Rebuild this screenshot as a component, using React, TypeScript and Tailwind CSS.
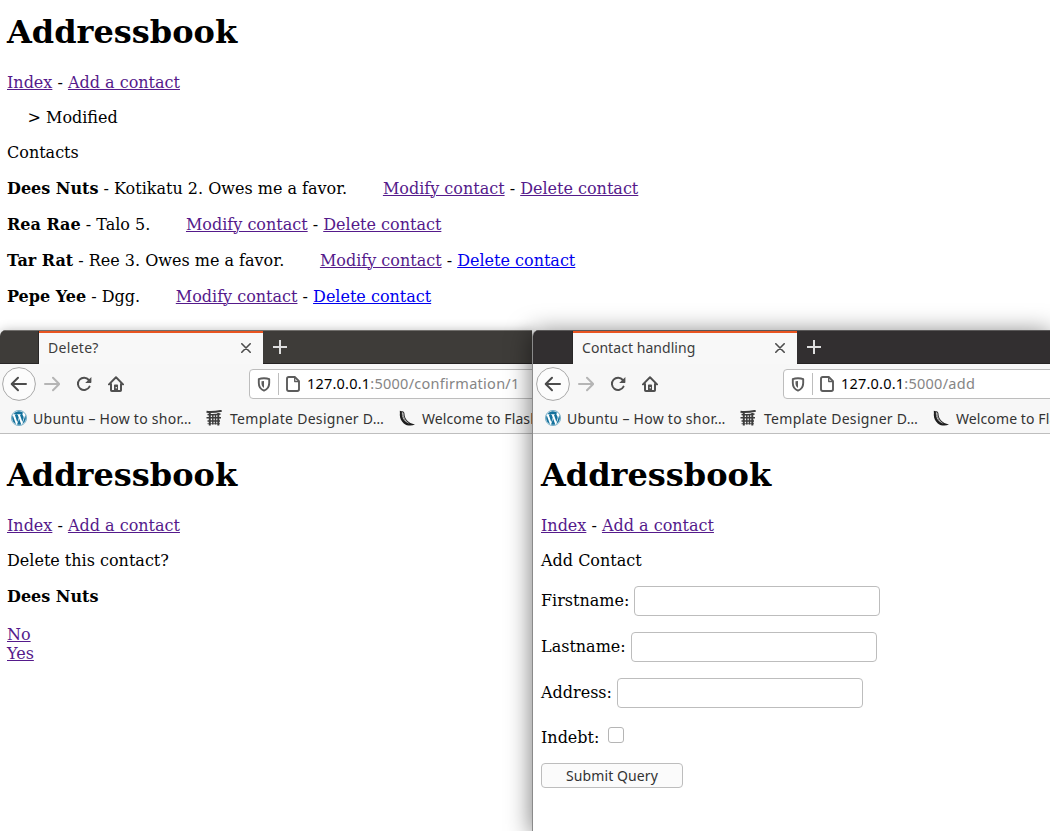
import React from "react";

const VISITED = "text-[#551a8b] underline underline-offset-[1px] decoration-1";
const UNVISITED = "text-[#0000ee] underline underline-offset-[1px] decoration-1";

function Link({ children, fresh = false }: { children: React.ReactNode; fresh?: boolean }) {
  return <a className={fresh ? UNVISITED : VISITED}>{children}</a>;
}

function Header() {
  return (
    <>
      <h1 className="text-[32px] leading-[38px] font-bold">Addressbook</h1>
      <p className="mt-[22px]">
        <Link>Index</Link> - <Link>Add a contact</Link>
      </p>
    </>
  );
}

type Contact = { name: string; info: string; fresh: boolean };

const contacts: Contact[] = [
  { name: "Dees Nuts", info: "Kotikatu 2. Owes me a favor.", fresh: false },
  { name: "Rea Rae", info: "Talo 5.", fresh: false },
  { name: "Tar Rat", info: "Ree 3. Owes me a favor.", fresh: true },
  { name: "Pepe Yee", info: "Dgg.", fresh: true },
];

function BackIcon() {
  return (
    <svg width="34" height="34" viewBox="0 0 34 34" fill="none" className="shrink-0">
      <circle cx="17" cy="17" r="16.4" fill="#fcfcfc" stroke="#a8a8a8" />
      <path d="M24 17H10M16 10.7 9.7 17l6.3 6.3" stroke="#4c4c4c" strokeWidth="2" strokeLinecap="round" strokeLinejoin="round" />
    </svg>
  );
}

function ForwardIcon() {
  return (
    <svg width="16" height="16" viewBox="0 0 16 16" fill="none" stroke="#b5b5b5" strokeWidth="2" strokeLinecap="round" strokeLinejoin="round" className="shrink-0">
      <path d="M1 8h14M9 1.7 15.2 8 9 14.3" />
    </svg>
  );
}

function ReloadIcon() {
  return (
    <svg width="16" height="16" viewBox="0 0 16 16" fill="none" className="shrink-0">
      <path d="M12.8 4A6.1 6.1 0 1 0 13.5 10.6" stroke="#505050" strokeWidth="2" strokeLinecap="round" />
      <path d="M15.4 1v5.3a.7.7 0 0 1-.7.7H9.2z" fill="#505050" />
    </svg>
  );
}

function HomeIcon() {
  return (
    <svg width="16" height="16" viewBox="0 0 16 16" fill="none" className="shrink-0">
      <path d="M1 8.4 8 1.3l7 7.1M3 8v6.2a.8.8 0 0 0 .8.8h8.4a.8.8 0 0 0 .8-.8V8" stroke="#505050" strokeWidth="2" strokeLinecap="round" strokeLinejoin="round" />
      <path d="M6 15V9.6c0-.6.4-1 1-1h2c.6 0 1 .4 1 1V15z" fill="#505050" />
      <circle cx="8.3" cy="11.7" r=".8" fill="#f7f7f7" />
    </svg>
  );
}

function ShieldIcon() {
  return (
    <svg width="14" height="15" viewBox="0 0 14 15" fill="none" className="shrink-0">
      <path d="M7 1.2c2 0 3.8.3 5.2.9V6c0 3.600-1.800 6.300-5.200 7.600C3.600 12.300 1.800 9.600 1.800 6V2.100C3.200 1.500 5 1.200 7 1.200Z" stroke="#5c5c5c" strokeWidth="1.9" strokeLinejoin="round" />
      <path d="M7 4v7C5.200 9.900 4.500 8.300 4.500 6.300V4.300Q5.600 4 7 4Z" fill="#5c5c5c" />
    </svg>
  );
}

function PageIcon() {
  return (
    <svg width="14" height="16" viewBox="0 0 14 16" fill="none" stroke="#5c5c5c" strokeWidth="1.9" strokeLinejoin="round" className="shrink-0">
      <path d="M2.700 1H8.800L13 5.200V13.300Q13 15 11.300 15H2.700Q1 15 1 13.300V2.700Q1 1 2.700 1Z" />
      <path d="M8.700 1.500V5.500H12.700" strokeWidth="1.300" />
    </svg>
  );
}

function WordpressIcon() {
  return (
    <svg width="16" height="16" viewBox="0 0 16 16" className="shrink-0">
      <circle cx="8" cy="8" r="7.600" fill="#fff" stroke="#4590b3" strokeWidth=".7" />
      <path
        fill="#14719c"
        d="M1.150 8c0 2.700 1.600 5.100 3.850 6.150L1.750 5.200A6.900 6.900 0 0 0 1.150 8Zm11.500-.35c0-.85-.3-1.450-.56-1.900-.35-.55-.67-1.030-.67-1.600 0-.62.47-1.200 1.140-1.200h.08A6.850 6.850 0 0 0 2.280 4.250h.44c.7 0 1.820-.1 1.820-.1.370 0 .42.520.05.550 0 0-.37.050-.78.070l2.480 7.370 1.490-4.460-1.060-2.910c-.37-.02-.7-.07-.7-.07-.38-.02-.34-.57.020-.55 0 0 1.120.1 1.790.1.710 0 1.820-.1 1.820-.1.370 0 .42.520.050.550 0 0-.37.050-.78.070l2.460 7.310.68-2.260c.35-.9.590-1.610.590-2.170ZM8.120 8.600l-2.050 5.970a6.850 6.850 0 0 0 4.200-.11ZM14 4.700c.1 1.100-.1 2.100-.6 3.300l-2.070 5.960A6.850 6.850 0 0 0 14 4.700Z"
      />
    </svg>
  );
}

function TempleIcon() {
  return (
    <svg width="17" height="16" viewBox="0 0 17 16" fill="none" stroke="#3d3d3d" className="shrink-0">
      <path d="M.5 1.800Q7 2.700 15.700.7" strokeWidth="2" />
      <path d="M1.500 4.500Q8 5.200 14.500 4" strokeWidth="1.500" />
      <path d="M.5 7.700h14.500M1.500 11h12.500" strokeWidth="1.400" />
      <path d="M3.800 3v12.500M12.300 3v12.500" strokeWidth="2" />
      <path d="M6.800 5v9.500M9.500 5v9.500" strokeWidth="1.500" />
      <path d="M1.500 13.700h12.500" strokeWidth=".8" />
    </svg>
  );
}

function FlaskIcon() {
  return (
    <svg width="17" height="16" viewBox="0 0 17 16" className="shrink-0">
      <path d="M.8.8 2.600 1.200C4.500.8 5.600 2.300 5.500 4.200 5.700 8.800 8.900 12.800 16 14.600 12.400 16.200 8 15.900 4.800 13.400 1.800 10.800.4 7.300.9 3.600Z" fill="#1d1d1d" />
      <path d="M2.800 2.600c1-.7 1.700 0 1.800 1C4.600 8 6.800 11.300 10.400 13.500 7 12.900 3.600 9.600 3 5.500Z" fill="#b9b9b9" />
      <path d="M2.600 5.200h2M3 7.500l1.900-.5M4.300 9.800l1.600-.8" stroke="#444" strokeWidth=".6" />
    </svg>
  );
}

function CloseIcon() {
  return (
    <svg width="10" height="10" viewBox="0 0 10 10" stroke="#4d4d4d" strokeWidth="1.600" strokeLinecap="round" className="shrink-0 mb-[2px]">
      <path d="M.8.8 9.200 9.200M9.200.8.8 9.200" />
    </svg>
  );
}

function PlusIcon() {
  return (
    <svg width="14" height="14" viewBox="0 0 14 14" stroke="#dedede" strokeWidth="2" className="shrink-0">
      <path d="M7 0v14M0 7h14" />
    </svg>
  );
}

type WindowProps = {
  title: string;
  titleSpacing: string;
  path: string;
  active?: boolean;
  children: React.ReactNode;
};

function BrowserWindow({ title, titleSpacing, path, active = false, children }: WindowProps) {
  return (
    <div
      className={
        active
          ? "relative z-10 w-[518px] h-[501px] pl-px rounded-tl-[7px] bg-[#8a8a8a] shadow-[0_3px_24px_1px_rgba(0,0,0,0.5)]"
          : "w-[532px] h-[501px] rounded-tl-[7px] shadow-[0_2px_12px_1px_rgba(0,0,0,0.3)]"
      }
    >
      <div className="flex flex-col h-full bg-white rounded-tl-[6px] overflow-hidden">
        <div
          className={
            active
              ? "flex h-[34px] shrink-0 bg-[#322f30] border-t border-[#5a5858]"
              : "flex h-[34px] shrink-0 bg-[#3e3c39] border-t border-[#716f6c]"
          }
        >
          <div
            className={
              active
                ? "w-[40px] h-full shrink-0 border-b border-r border-[#292727]"
                : "w-[39px] h-full shrink-0 border-b border-r border-[#292727]"
            }
          />
          <div className="flex items-center justify-between w-[224px] h-[33px] shrink-0 bg-[#f8f8f8] border-t-2 border-[#e95420] pl-[9px] pr-3 text-[#3d3d3d]">
            <span className={titleSpacing}>{title}</span>
            <CloseIcon />
          </div>
          <div className="flex items-center grow pl-[10px] border-b border-[#252323]">
            <PlusIcon />
          </div>
        </div>
        <div
          className={
            active
              ? "flex items-center h-[40px] shrink-0 bg-[#f7f7f7] pl-[3px]"
              : "flex items-center h-[40px] shrink-0 bg-[#f7f7f7] pl-[2px]"
          }
        >
          <BackIcon />
          <div className="flex items-center gap-4 ml-2">
            <ForwardIcon />
            <ReloadIcon />
            <HomeIcon />
          </div>
          <div className="flex items-center grow h-[30px] ml-[125px] -mr-2 pl-[7px] bg-white border border-[#bdbdbd] rounded-[4px]">
            <ShieldIcon />
            <div className="w-px h-[22px] bg-[#bdbdbd] ml-[7px] mr-[7px]" />
            <PageIcon />
            <span className="ml-[7px] whitespace-nowrap text-[14.5px] text-[#858585]">
              <span className="text-black tracking-[0.2px]">127.0.0.1</span>
              <span className="tracking-[0.27px]">{path}</span>
            </span>
          </div>
        </div>
        <div
          className={
            active
              ? "flex items-center h-[30px] pb-px shrink-0 bg-[#f7f7f7] border-b border-[#bebebe] pl-[12px] text-[#333] whitespace-nowrap overflow-hidden"
              : "flex items-center h-[30px] pb-px shrink-0 bg-[#f7f7f7] border-b border-[#bebebe] pl-[11px] text-[#333] whitespace-nowrap overflow-hidden"
          }
        >
          <WordpressIcon />
          <span className="w-[179px] shrink-0 pl-[6px] tracking-[0.27px]">Ubuntu – How to shor…</span>
          <TempleIcon />
          <span className="w-[176px] shrink-0 pl-[7px] tracking-[0.3px]">Template Designer D…</span>
          <FlaskIcon />
          <span className="pl-[6px] tracking-[0.1px]">Welcome to Flask</span>
        </div>
        <div
          className={
            active
              ? "grow pl-[8px] pt-[22px] font-['DejaVu_Serif',serif] text-[16px] leading-[19px] text-black"
              : "grow pl-[7px] pt-[22px] font-['DejaVu_Serif',serif] text-[16px] leading-[19px] text-black"
          }
        >
          {children}
        </div>
      </div>
    </div>
  );
}

function Field({ label }: { label: string }) {
  return (
    <label className="flex h-[30px] mb-4">
      <span className="pt-[5px] mr-[5px]">{label}</span>
      <input className="w-[246px] h-[30px] bg-white border border-[#bdbdbd] rounded-[4px]" />
    </label>
  );
}

export default function App() {
  return (
    <div className="w-[1050px] h-[831px] overflow-hidden bg-white text-black font-['Noto_Sans',sans-serif] text-[14px]">
      <main className="h-[330px] pl-[7px] pt-[13px] font-['DejaVu_Serif',serif] text-[16px] leading-[19px]">
        <Header />
        <p className="mt-4 pl-[20.5px]">&gt; Modified</p>
        <p className="mt-4 mb-[17px]">Contacts</p>
        <div className="flex flex-col gap-[17px]">
          {contacts.map((c) => (
            <p key={c.name}>
              <b>{c.name}</b> - {c.info}
              <span className="ml-[35.7px]">
                <Link>Modify contact</Link> - <Link fresh={c.fresh}>Delete contact</Link>
              </span>
            </p>
          ))}
        </div>
      </main>
      <div className="flex">
        <BrowserWindow title="Delete?" titleSpacing="pb-[3px] tracking-[0.3px]" path=":5000/confirmation/1">
          <Header />
          <p className="mt-4">Delete this contact?</p>
          <p className="mt-[17px] font-bold">Dees Nuts</p>
          <p className="mt-[19px]">
            <Link>No</Link>
            <br />
            <Link>Yes</Link>
          </p>
        </BrowserWindow>
        <BrowserWindow title="Contact handling" titleSpacing="pb-[3px] tracking-[0.05px]" path=":5000/add" active>
          <Header />
          <p className="mt-4 mb-4">Add Contact</p>
          <Field label="Firstname:" />
          <Field label="Lastname:" />
          <Field label="Address:" />
          <label className="flex h-[19px] mt-[20px]">
            <span>Indebt:</span>
            <input type="checkbox" className="appearance-none w-4 h-4 ml-[9px] -mt-px bg-white border border-[#b5b5b5] rounded-[3px]" />
          </label>
          <button className="block w-[142px] h-[25px] mt-4 bg-[#fbfbfb] border border-[#bdbdbd] rounded-[4px] font-['Noto_Sans',sans-serif] text-[14px] leading-[23px] tracking-[0.1px] text-[#333]">
            Submit Query
          </button>
        </BrowserWindow>
      </div>
    </div>
  );
}
